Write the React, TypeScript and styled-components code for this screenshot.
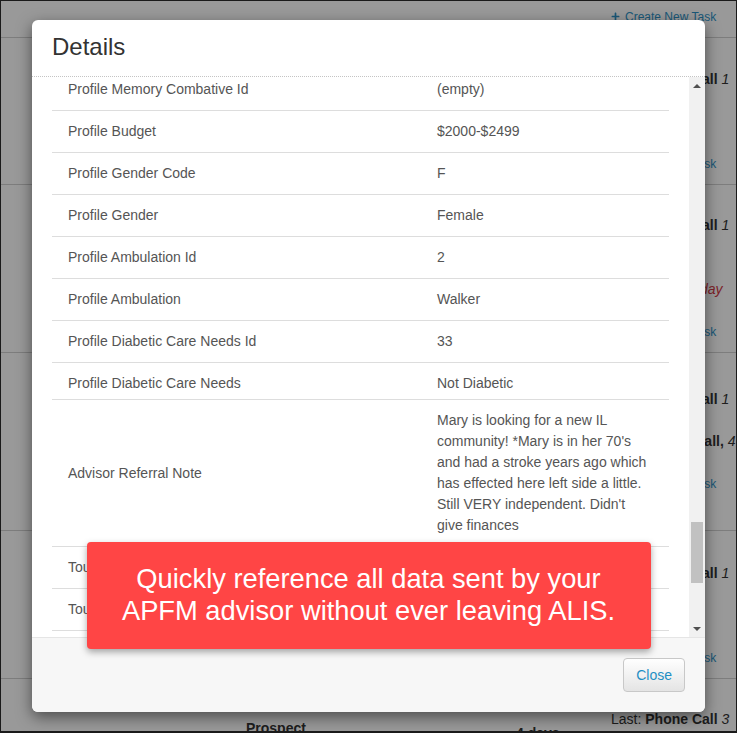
import { useLayoutEffect, useRef, useState } from 'react';
import styled, { createGlobalStyle } from 'styled-components';
import { FaPlus } from 'react-icons/fa';

const GlobalStyle = createGlobalStyle`
  html, body {
    margin: 0;
    padding: 0;
    background-color: #fff;
  }

  body {
    font-family: 'Liberation Sans', Arial, sans-serif;
  }

  * {
    box-sizing: border-box;
  }
`;

const Frame = styled.div`
  position: relative;
  width: 737px;
  height: 733px;
  overflow: hidden;

  background-color: #fff;
  border: 1px solid #1a1a1a;
  border-bottom-width: 2px;
`;

/* ---------- page behind the modal ---------- */

const LeadList = styled.div`
  display: flex;
  flex-direction: column;
`;

const LeadRow = styled.div<{ $height: number }>`
  flex-shrink: 0;
  display: grid;
  grid-template-columns: 245px 270px 95px 1fr;
  height: ${({ $height }) => $height}px;

  border-bottom: 1px solid #d0d0d0;
  font-size: 14px;
  line-height: 20px;
  color: #333;
`;

const LeadCell = styled.div<{ $offset: number }>`
  padding-top: ${({ $offset }) => $offset}px;
  font-weight: 700;
  white-space: nowrap;
`;

const ActivityColumn = styled.div`
  display: flex;
  flex-direction: column;
  overflow: hidden;
  white-space: nowrap;
`;

const ActivityLine = styled.div<{ $gap: number; $tone?: 'due' }>`
  margin-top: ${({ $gap }) => $gap}px;
  height: 20px;
  color: ${({ $tone }) => ($tone === 'due' ? '#d23a46' : '#333')};

  & b {
    font-weight: 700;
  }

  & i {
    font-style: italic;
  }
`;

const CreateLink = styled.a`
  display: inline-flex;
  align-items: center;
  gap: 5px;
  font-size: 12px;
  color: #2e93c9;
  text-decoration: none;
`;

/* ---------- modal ---------- */

const Backdrop = styled.div`
  position: absolute;
  inset: 0;
  background-color: rgba(0, 0, 0, 0.4);
`;

const Dialog = styled.div`
  position: absolute;
  top: 19px;
  left: 31px;
  width: 673px;
  height: 692px;
  display: flex;
  flex-direction: column;
  overflow: hidden;

  background-color: #fff;
  border-radius: 6px;
  box-shadow: 0 5px 15px rgba(0, 0, 0, 0.5);
`;

const DialogHeader = styled.div`
  flex-shrink: 0;
  padding: 14px 20px 16px;
  border-bottom: 1px dotted #c4c4c4;
`;

const DialogTitle = styled.h4`
  margin: 0;
  font-size: 24px;
  line-height: 26px;
  font-weight: 400;
  color: #333;
`;

const DialogMain = styled.div`
  flex: 1;
  min-height: 0;
  display: flex;
`;

const DialogBody = styled.div`
  flex: 1;
  min-width: 0;
  padding: 15px 20px;
  overflow-y: scroll;
  scrollbar-width: none;

  &::-webkit-scrollbar {
    display: none;
  }
`;

const ScrollRail = styled.div`
  flex-shrink: 0;
  width: 16px;
  display: flex;
  flex-direction: column;
  background-color: #f1f1f1;
`;

const RailButton = styled.div`
  flex-shrink: 0;
  height: 17px;
  display: flex;
  align-items: center;
  justify-content: center;
  color: #505050;
`;

const RailTrack = styled.div`
  position: relative;
  flex: 1;
`;

const RailThumb = styled.div`
  position: absolute;
  left: 2px;
  right: 2px;
  background-color: #c1c1c1;
`;

const DetailsTable = styled.table`
  width: 100%;
  table-layout: fixed;
  border-collapse: collapse;

  font-size: 14px;
  line-height: 21px;
  color: #555;
`;

const LabelCol = styled.col`
  width: 369px;
`;

const DataRow = styled.tr<{ $tight?: boolean }>`
  & > td {
    padding: 10px 16px ${({ $tight }) => ($tight ? 5 : 10)}px;
    border-top: 1px solid #ddd;
    vertical-align: middle;
  }
`;

const DialogFooter = styled.div`
  flex-shrink: 0;
  display: flex;
  justify-content: flex-end;
  padding: 20px;

  background-color: #f7f7f7;
  border-top: 1px solid #e5e5e5;
`;

const CloseButton = styled.button`
  padding: 6px 12px;
  font-family: 'Liberation Sans', Arial, sans-serif;
  font-size: 14px;
  line-height: 20px;
  color: #1f8fc4;

  background: linear-gradient(to bottom, #ffffff 0%, #e4e4e4 100%);
  border: 1px solid #c8c8c8;
  border-radius: 4px;
  cursor: pointer;
`;

const Toast = styled.div`
  position: absolute;
  left: 50%;
  bottom: 82px;
  transform: translateX(-50%);
  width: 564px;
  padding: 21px 20px 22px;

  background-color: #ff4545;
  border-radius: 4px;
  box-shadow: 0 3px 7px rgba(0, 0, 0, 0.35);

  font-family: 'Liberation Sans', Arial, sans-serif;
  font-size: 27.3px;
  line-height: 32px;
  text-align: center;
  color: #fff;
`;

/* ---------- data ---------- */

type Activity =
  | { kind: 'last'; gap: number; count: number }
  | { kind: 'next'; gap: number; count: number }
  | { kind: 'due'; gap: number }
  | { kind: 'create'; gap: number };

type Lead = {
  height: number;
  status: string;
  age: string;
  statusOffset: number;
  ageOffset: number;
  activity: Activity[];
};

const leads: Lead[] = [
  { height: 37, status: '', age: '', statusOffset: 0, ageOffset: 0, activity: [{ kind: 'create', gap: 5 }] },
  {
    height: 147,
    status: 'Prospect',
    age: '2 days',
    statusOffset: 39,
    ageOffset: 44,
    activity: [
      { kind: 'last', gap: 31, count: 1 },
      { kind: 'create', gap: 64 },
    ],
  },
  {
    height: 168,
    status: 'Prospect',
    age: '3 days',
    statusOffset: 39,
    ageOffset: 44,
    activity: [
      { kind: 'last', gap: 30, count: 1 },
      { kind: 'due', gap: 44 },
      { kind: 'create', gap: 22 },
    ],
  },
  {
    height: 178,
    status: 'Prospect',
    age: '3 days',
    statusOffset: 39,
    ageOffset: 44,
    activity: [
      { kind: 'last', gap: 36, count: 1 },
      { kind: 'next', gap: 22, count: 4 },
      { kind: 'create', gap: 22 },
    ],
  },
  {
    height: 148,
    status: 'Prospect',
    age: '4 days',
    statusOffset: 39,
    ageOffset: 44,
    activity: [
      { kind: 'last', gap: 32, count: 1 },
      { kind: 'create', gap: 64 },
    ],
  },
  {
    height: 100,
    status: 'Prospect',
    age: '4 days',
    statusOffset: 39,
    ageOffset: 44,
    activity: [{ kind: 'last', gap: 30, count: 3 }],
  },
];

type Detail = { label: string; value: string; tight?: boolean; anchor?: boolean };

const fillerPrefixes = ['Contact', 'Resident', 'Inquiry', 'Profile'];
const fillerFields = [
  'Id',
  'First Name',
  'Last Name',
  'Middle Name',
  'Nickname',
  'Phone',
  'Mobile Phone',
  'Email',
  'Address',
  'City',
  'State',
  'Zip',
  'Country',
  'Relationship',
  'Preferred Contact',
  'Created Date',
  'Modified Date',
  'Source',
  'Status',
  'Type',
  'Notes Count',
  'Owner Id',
  'Partner Id',
  'External Id',
];

const earlierDetails: Detail[] = fillerPrefixes
  .flatMap(prefix => fillerFields.map(field => ({ label: `${prefix} ${field}`, value: '(empty)' })))
  .slice(0, 93);

const visibleDetails: Detail[] = [
  { label: 'Profile Memory Combative Id', value: '(empty)', anchor: true },
  { label: 'Profile Budget', value: '$2000-$2499' },
  { label: 'Profile Gender Code', value: 'F' },
  { label: 'Profile Gender', value: 'Female' },
  { label: 'Profile Ambulation Id', value: '2' },
  { label: 'Profile Ambulation', value: 'Walker' },
  { label: 'Profile Diabetic Care Needs Id', value: '33' },
  { label: 'Profile Diabetic Care Needs', value: 'Not Diabetic', tight: true },
  {
    label: 'Advisor Referral Note',
    value:
      "Mary is looking for a new IL community! *Mary is in her 70's and had a stroke years ago which has effected here left side a little. Still VERY independent. Didn't give finances",
  },
  { label: 'Tour Date', value: '(empty)' },
  { label: 'Tour Time', value: '(empty)' },
  { label: 'Living Situation', value: '(empty)' },
];

const laterDetails: Detail[] = [
  'Lead Source',
  'Lead Status',
  'Referral Date',
  'Referral Type',
  'Advisor Name',
  'Advisor Email',
  'Advisor Phone',
].map(label => ({ label, value: '(empty)' }));

const details = [...earlierDetails, ...visibleDetails, ...laterDetails];

/* ---------- components ---------- */

const ArrowIcon: React.FC<{ down?: boolean }> = ({ down }) => (
  <svg width="8" height="4" viewBox="0 0 8 4">
    <polygon points={down ? '0,0 8,0 4,4' : '0,4 8,4 4,0'} fill="currentColor" />
  </svg>
);

const ActivityItem: React.FC<{ item: Activity }> = ({ item }) => {
  if (item.kind === 'create')
    return (
      <ActivityLine $gap={item.gap}>
        <CreateLink href="#">
          <FaPlus size={9} />
          Create New Task
        </CreateLink>
      </ActivityLine>
    );

  if (item.kind === 'due')
    return (
      <ActivityLine $gap={item.gap} $tone="due">
        Scheduled: <i>Today</i>
      </ActivityLine>
    );

  return (
    <ActivityLine $gap={item.gap}>
      {item.kind === 'last' ? 'Last: ' : 'Next: '}
      <b>{item.kind === 'last' ? 'Phone Call' : 'Phone Call,'}</b> <i>{item.count}</i>
      {item.kind === 'next' && ' days'}
    </ActivityLine>
  );
};

const App: React.FC = () => {
  const bodyRef = useRef<HTMLDivElement>(null);
  const anchorRef = useRef<HTMLTableRowElement>(null);
  const trackRef = useRef<HTMLDivElement>(null);
  const [thumb, setThumb] = useState({ top: 0, height: 0 });

  const syncThumb = () => {
    const body = bodyRef.current;
    const track = trackRef.current;
    if (!body || !track) return;

    const trackHeight = track.clientHeight;
    setThumb({
      top: (trackHeight * body.scrollTop) / body.scrollHeight,
      height: (trackHeight * body.clientHeight) / body.scrollHeight,
    });
  };

  useLayoutEffect(() => {
    const body = bodyRef.current;
    const anchor = anchorRef.current;
    if (!body || !anchor) return;

    body.scrollTop = 0;
    const offset = anchor.getBoundingClientRect().top - body.getBoundingClientRect().top;
    body.scrollTop = offset + 8;
    syncThumb();
  }, []);

  return (
    <>
      <GlobalStyle />
      <Frame>
        <LeadList>
          {leads.map((lead, i) => (
            <LeadRow key={i} $height={lead.height}>
              <div />
              <LeadCell $offset={lead.statusOffset}>{lead.status}</LeadCell>
              <LeadCell $offset={lead.ageOffset}>{lead.age}</LeadCell>
              <ActivityColumn>
                {lead.activity.map((item, j) => (
                  <ActivityItem key={j} item={item} />
                ))}
              </ActivityColumn>
            </LeadRow>
          ))}
        </LeadList>

        <Backdrop />

        <Dialog>
          <DialogHeader>
            <DialogTitle>Details</DialogTitle>
          </DialogHeader>

          <DialogMain>
            <DialogBody ref={bodyRef} onScroll={syncThumb}>
              <DetailsTable>
                <colgroup>
                  <LabelCol />
                  <col />
                </colgroup>
                <tbody>
                  {details.map((detail, i) => (
                    <DataRow key={i} $tight={detail.tight} ref={detail.anchor ? anchorRef : undefined}>
                      <td>{detail.label}</td>
                      <td>{detail.value}</td>
                    </DataRow>
                  ))}
                </tbody>
              </DetailsTable>
            </DialogBody>

            <ScrollRail>
              <RailButton>
                <ArrowIcon />
              </RailButton>
              <RailTrack ref={trackRef}>
                <RailThumb style={{ top: thumb.top, height: thumb.height }} />
              </RailTrack>
              <RailButton>
                <ArrowIcon down />
              </RailButton>
            </ScrollRail>
          </DialogMain>

          <DialogFooter>
            <CloseButton type="button">Close</CloseButton>
          </DialogFooter>
        </Dialog>

        <Toast>Quickly reference all data sent by your APFM advisor without ever leaving ALIS.</Toast>
      </Frame>
    </>
  );
};

export default App;
